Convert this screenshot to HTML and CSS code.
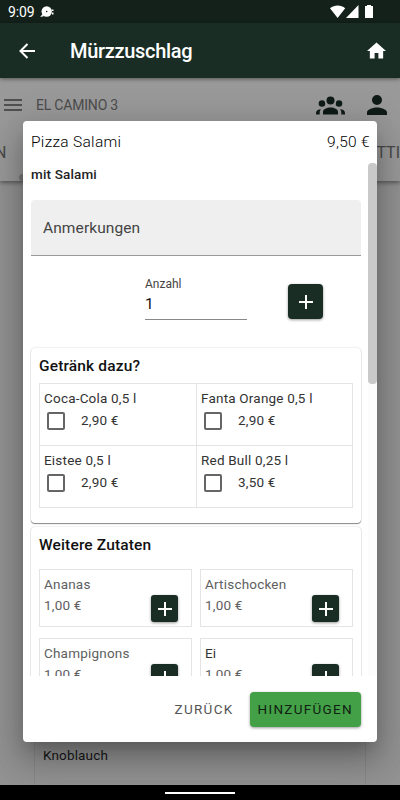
FILE: index.html
```html
<!DOCTYPE html>
<html lang="de">
<head>
<meta charset="utf-8">
<title>Mürzzuschlag</title>
<link rel="stylesheet" href="styles.css">
</head>
<body>
<svg class="defs" width="0" height="0"><symbol id="plus" viewBox="0 0 24 24"><path d="M12 5v14M5 12h14" fill="none" stroke="#fff" stroke-width="2"/></symbol></svg>
<div class="screen">
  <div class="status">
    <span class="clock">9:09</span>
    <svg class="notice" viewBox="0 0 14 12"><circle cx="6.7" cy="5.5" r="5.2"/><path d="M2.5 8L.2 11l3.600-.8zM12 3.500h1.500v1.500H12zM12 6.500h1.500v2H12z"/><circle cx="6.700" cy="5.500" r=".8" class="hole"/></svg>
    <svg class="signals" viewBox="0 0 44 14"><path d="M0 3.200C4.500-.5 11-.5 15.200 3.200L7.600 13zM28.500 0v13H16zM37 0h4v1h2v12h-8V1h2z"/></svg>
  </div>
  <header class="appbar">
    <svg class="back" viewBox="0 0 16 16"><path d="M16 8H2M8.500 1L1.500 8l7 7"/></svg>
    <h1>Mürzzuschlag</h1>
    <svg class="home" viewBox="2 3 20 17"><path d="M10 20v-6h4v6h5v-8h3L12 3 2 12h3v8z"/></svg>
  </header>
  <main class="page">
    <section class="menu">
      <div class="toolbar">
        <svg class="burger" viewBox="0 0 18 12"><path d="M0 0h18v2H0zM0 5h18v2H0zM0 10h18v2H0z"/></svg>
        <span class="place">EL CAMINO 3</span>
        <svg class="group" viewBox="0 0 29 19"><circle cx="14.500" cy="4.500" r="4"/><circle cx="6" cy="7.500" r="3.300"/><circle cx="23" cy="7.500" r="3.300"/><path d="M7 18.500v-2.500c0-6 15-6 15 0v2.500zM0 18.500v-1.500c0-2.400 2-3.600 5-3.800-1 1-1.300 2-1.300 3.300v2zM29 18.500v-1.500c0-2.400-2-3.600-5-3.800 1 1 1.300 2 1.300 3.300v2z"/><path class="gap" d="M9 4.500q.5 3.500 2.600 5M20 4.500q-.5 3.500-2.600 5"/></svg>
        <svg class="person" viewBox="4 4 16 16"><path d="M12 12a4 4 0 1 0 0-8 4 4 0 0 0 0 8zm0 2c-2.670 0-8 1.340-8 4v2h16v-2c0-2.660-5.330-4-8-4z"/></svg>
      </div>
      <div class="tabs"><span>N</span><span>TTI</span></div>
      <i class="thumb"></i>
    </section>
    <div class="under">Knoblauch</div>
  </main>
  <footer class="nav"><i></i></footer>
</div>
<div class="dialog">
  <div class="head"><span>Pizza Salami</span><span class="price">9,50 €</span></div>
  <div class="scroll">
    <p class="desc">mit Salami</p>
    <div class="notes">Anmerkungen</div>
    <div class="amount">
      <div class="field"><label>Anzahl</label><span>1</span></div>
      <button class="add"><svg><use href="#plus"/></svg></button>
    </div>
    <section class="card drinks">
      <h2>Getränk dazu?</h2>
      <div class="options">
        <div class="option"><b>Coca-Cola 0,5 l</b><div><i></i><span>2,90 €</span></div></div>
        <div class="option"><b>Fanta Orange 0,5 l</b><div><i></i><span>2,90 €</span></div></div>
        <div class="option"><b>Eistee 0,5 l</b><div><i></i><span>2,90 €</span></div></div>
        <div class="option"><b>Red Bull 0,25 l</b><div><i></i><span>3,50 €</span></div></div>
      </div>
    </section>
    <section class="card extras">
      <h2>Weitere Zutaten</h2>
      <div class="items">
        <div class="item"><div>Ananas<br>1,00 €</div><button class="add small"><svg><use href="#plus"/></svg></button></div>
        <div class="item"><div>Artischocken<br>1,00 €</div><button class="add small"><svg><use href="#plus"/></svg></button></div>
        <div class="item"><div>Champignons<br>1,00 €</div><button class="add small"><svg><use href="#plus"/></svg></button></div>
        <div class="item dark"><div>Ei<br><span>1,00 €</span></div><button class="add small"><svg><use href="#plus"/></svg></button></div>
      </div>
    </section>
    <div class="track"><i></i></div>
  </div>
  <div class="actions"><button class="cancel">ZURÜCK</button><button class="confirm">HINZUFÜGEN</button></div>
</div>
</body>
</html>
```
FILE: styles.css
```css
* { box-sizing: border-box; }
body { margin: 0; font-family: Roboto, sans-serif; overflow: hidden; }
svg { display: block; flex: none; }
h1, h2, p { margin: 0; }
button { border: 0; padding: 0; font-family: inherit; }
.defs { position: absolute; }
.screen { width: 400px; height: 800px; display: flex; flex-direction: column; }
.status { height: 23px; background: #14211b; display: flex; align-items: center; padding: 0 26px 0 8px; color: #fff; flex: none; }
.clock { font-size: 14px; line-height: 23px; padding-top: 1px; letter-spacing: -.1px; }
.status svg { fill: #fff; }
.notice { width: 14px; height: 12px; margin-left: 5px; }
.notice .hole { fill: #14211b; }
.signals { width: 44px; height: 14px; margin-left: auto; }
.appbar { height: 55px; background: #192d25; color: #fff; display: flex; align-items: center; padding: 0 14px 0 19px; flex: none; z-index: 2; box-shadow: 0 1px 4px rgba(0,0,0,.45); }
.back { width: 16px; height: 16px; fill: none; stroke: #fff; stroke-width: 2; }
.appbar h1 { font-size: 20px; font-weight: 500; margin-left: 35px; letter-spacing: -.3px; }
.home { width: 19px; height: 17px; fill: #fff; margin-left: auto; }
.page { flex: 1; background: #929292; display: flex; flex-direction: column; min-height: 0; }
.menu { height: 103px; position: relative; background: #999; box-shadow: 0 2px 4px rgba(0,0,0,.38); flex: none; }
.toolbar { height: 54px; display: flex; align-items: center; padding: 0 13px 0 4px; }
.burger { width: 18px; height: 12px; fill: #505050; }
.place { margin-left: 14px; font-size: 14px; color: #4c4c4c; letter-spacing: -.2px; }
.group { width: 29px; height: 19px; margin-left: auto; fill: #0f1b16; }
.gap { fill: none; stroke: #999; stroke-width: 1; }
.person { width: 20px; height: 20px; margin-left: 22px; fill: #0f1b16; }
.tabs { height: 40px; display: flex; justify-content: space-between; align-items: center; font-size: 16px; color: #484848; margin-left: -5px; }
.thumb { position: absolute; left: 19px; bottom: 0; width: 100px; height: 7px; border-radius: 4px; background: #777; }
.under { margin: auto 34px 0; height: 60px; border: solid #888; border-width: 0 1px; padding: 22px 0 0 8px; font-size: 13.500px; color: #171717; letter-spacing: .15px; }
.nav { height: 15px; background: #000; display: flex; justify-content: center; align-items: center; flex: none; }
.nav i { width: 70px; height: 2px; background: #fff; margin-top: 1px; }
.dialog { position: absolute; z-index: 5; left: 23px; top: 121px; width: 354px; height: 621px; border-radius: 4px; overflow: visible; background: #fff; display: flex; flex-direction: column; box-shadow: 0 11px 15px -7px rgba(0,0,0,.2), 0 20px 30px 3px rgba(0,0,0,.16), 0 7px 36px 7px rgba(0,0,0,.14); }
.head { height: 42px; display: flex; justify-content: space-between; padding: 0 7px 0 8px; line-height: 42px; font-size: 15.500px; font-weight: 300; color: #000; letter-spacing: .3px; flex: none; }
.scroll { height: 513px; overflow: hidden; position: relative; padding: 0 16px 0 8px; flex: none; }
.desc { font-size: 13.500px; font-weight: 500; line-height: 22px; color: #222; letter-spacing: .15px; }
.notes { margin-top: 15px; height: 56px; background: #efefef; border-bottom: 1px solid #999; border-radius: 4px 4px 0 0; padding-left: 12px; line-height: 56px; font-size: 15.500px; color: #444; letter-spacing: .1px; }
.amount { display: flex; height: 91px; align-items: flex-start; padding: 19px 0 0 114px; }
.field { width: 102px; height: 45px; border-bottom: 1px solid #888; display: flex; flex-direction: column; }
.field label { font-size: 12px; line-height: 18px; color: #444; letter-spacing: 0; }
.field span { font-size: 15.500px; line-height: 22px; color: #111; }
.add { width: 35px; height: 35px; border-radius: 4px; background: #192d25; display: flex; align-items: center; justify-content: center; box-shadow: 0 1px 3px rgba(0,0,0,.4); margin: 9px 0 0 41px; flex: none; }
.add svg { width: 24px; height: 24px; }
.card { border-radius: 4px; box-shadow: 0 1px 1px rgba(0,0,0,.45), 0 0 2px rgba(0,0,0,.18); padding: 0 8px; }
.card h2 { font-size: 15.500px; font-weight: 500; color: #111; letter-spacing: .15px; padding-top: 1px; margin-bottom: -1px; }
.drinks { height: 175px; margin-top: 1px; }
.drinks h2 { line-height: 35px; }
.options { display: grid; grid-template-columns: 157px 156px; grid-auto-rows: 62px; border: solid #e4e4e4; border-width: 1px 0 0 1px; }
.option { border: solid #e4e4e4; border-width: 0 1px 1px 0; padding: 4px 4px; color: #333; font-size: 13.500px; letter-spacing: .2px; }
.option b { display: block; font-weight: 400; line-height: 20px; white-space: nowrap; }
.option div { display: flex; align-items: center; height: 24px; }
.option i { width: 18px; height: 18px; border: 2px solid #666; border-radius: 2px; margin: 2px 16px 0 3px; }
.extras { height: 260px; margin-top: 4px; }
.extras h2 { line-height: 35px; }
.items { display: grid; grid-template-columns: 153px 153px; grid-auto-rows: 58px; gap: 11px 8px; margin-top: 7px; }
.item { border: 1px solid #e4e4e4; padding: 4px 13px 0 4px; display: flex; justify-content: space-between; font-size: 13.500px; line-height: 21px; color: #606060; letter-spacing: .2px; }
.item.dark { color: #333; }
.item span { color: #606060; }
.small { width: 27px; height: 27px; margin: 21px 0 0; border-radius: 3px; }
.track { position: absolute; right: 0; top: 0; width: 9px; height: 513px; background: #fcfcfc; }
.track i { display: block; height: 221px; border-radius: 4px; background: #c9c9c9; }
.actions { flex: 1; display: flex; justify-content: flex-end; align-items: center; padding: 0 16px 0 0; }
.actions button { font-size: 13.500px; letter-spacing: 1.300px; }
.cancel { background: none; color: #555; margin-right: 16px; }
.actions .confirm { width: 111.500px; height: 35px; border-radius: 4px; background: #43a047; color: #102012; box-shadow: 0 1px 3px rgba(0,0,0,.4); }
```
